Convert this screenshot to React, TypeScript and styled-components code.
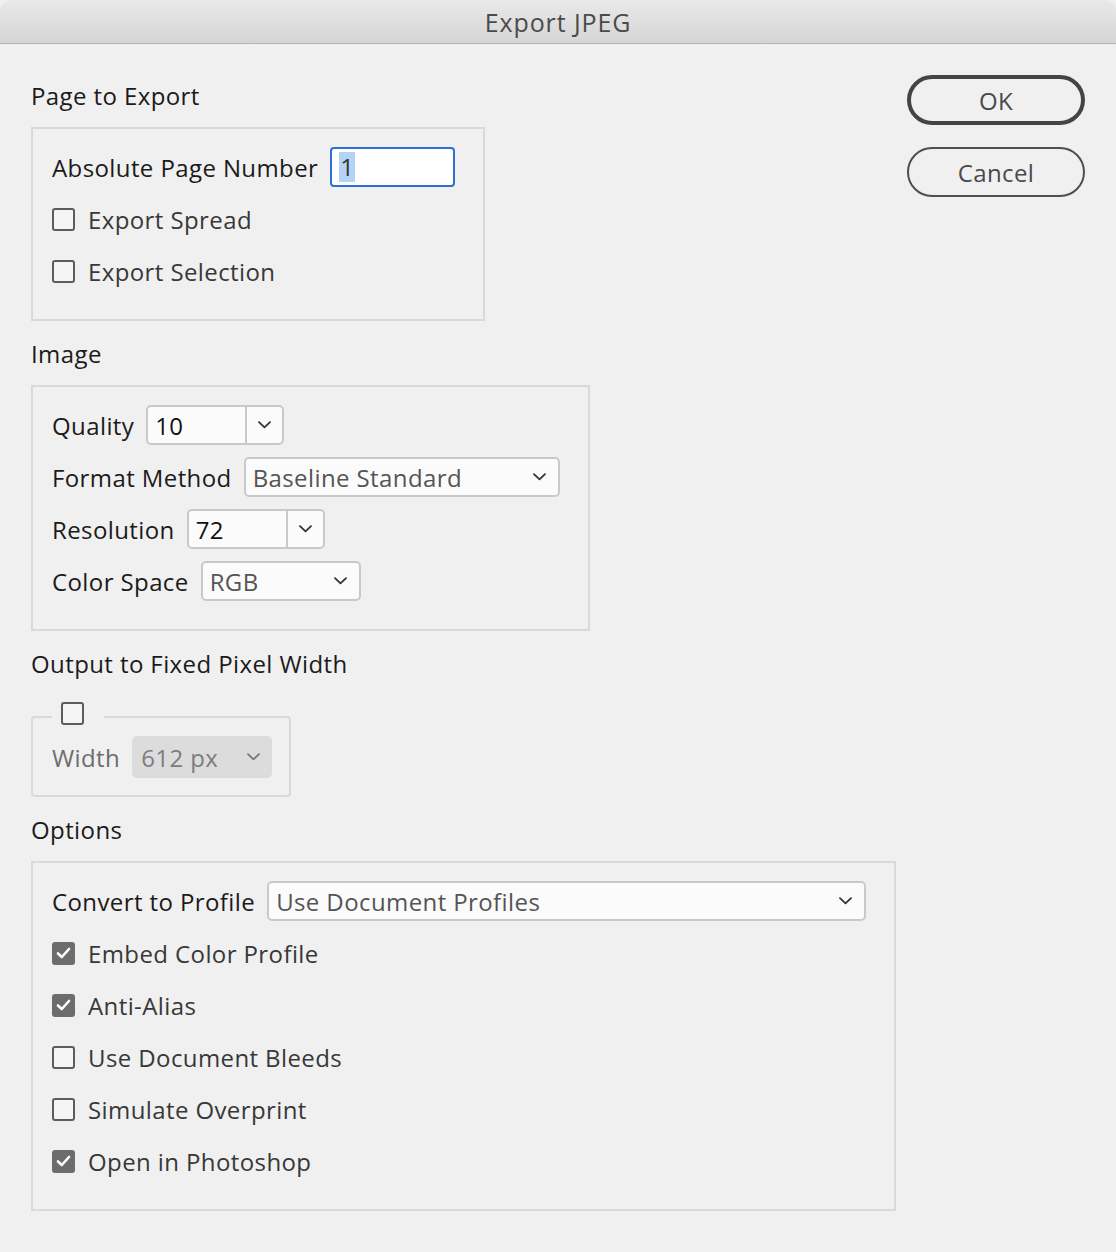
import React from "react"
import styled, { createGlobalStyle } from "styled-components"

const GlobalStyle = createGlobalStyle`
  html, body {
    margin: 0;
    padding: 0;
    background: #f0f0f0;
  }
  body {
    font-family: "Open Sans", "Noto Sans", sans-serif;
    letter-spacing: 0.4px;
    -webkit-font-smoothing: antialiased;
  }
`

const Window = styled.div`
  width: 1116px;
  min-height: 1252px;
  background: #f0f0f0;
  border-top-left-radius: 10px;
  border-top-right-radius: 10px;
  overflow: hidden;
`

const TitleBar = styled.div`
  height: 43px;
  border-bottom: 1px solid #b4b4b4;
  background: linear-gradient(#e9e9e9, #d5d5d5);
  display: flex;
  align-items: center;
  justify-content: center;
  font-size: 25px;
  letter-spacing: 0.9px;
  color: #4b4b4b;
`

const Body = styled.div`
  display: flex;
  padding: 0 31px;
`

const LeftCol = styled.div`
  flex: 1;
  padding-top: 37px;
`

const ButtonCol = styled.div`
  width: 178px;
  padding-top: 31px;
  display: flex;
  flex-direction: column;
  gap: 22px;
`

const Button = styled.button<{ $primary?: boolean }>`
  box-sizing: border-box;
  height: 50px;
  width: 100%;
  border-radius: 25px;
  border: ${p => (p.$primary ? "4px solid #444" : "2px solid #4e4e4e")};
  background: transparent;
  font-family: inherit;
  letter-spacing: inherit;
  font-size: 24px;
  color: #4a4a4a;
  padding: 0;
`

const Heading = styled.div<{ $first?: boolean }>`
  font-size: 24px;
  line-height: 30px;
  color: #1b1b1b;
  margin: ${p => (p.$first ? "0" : "18px")} 0 16px;
`

const Box = styled.div`
  box-sizing: border-box;
  width: fit-content;
  border: 2px solid #d9d9d9;
  padding: 18px 28px 28px 19px;
  display: flex;
  flex-direction: column;
  gap: 12px;
`

const FieldBox = styled.fieldset`
  box-sizing: border-box;
  width: fit-content;
  margin: 23px 0 0;
  border: 2px solid #d9d9d9;
  border-radius: 4px;
  padding: 6px 17px 18px 19px;
`

const Legend = styled.legend`
  padding: 0 20px 6px 9px;
  line-height: 0;
`

const Row = styled.div`
  display: flex;
  align-items: center;
  height: 40px;
  gap: 12px;
`

const Label = styled.span<{ $disabled?: boolean }>`
  font-size: 24px;
  color: ${p => (p.$disabled ? "#6d6d6d" : "#1b1b1b")};
  white-space: nowrap;
`

const CheckRow = styled.label`
  display: flex;
  align-items: center;
  height: 40px;
  gap: 13px;
  font-size: 24px;
  color: #383838;
`

const CheckBox = styled.span<{ $checked?: boolean }>`
  box-sizing: border-box;
  width: 23px;
  height: 23px;
  border-radius: 3px;
  border: 2px solid ${p => (p.$checked ? "#6c6c6c" : "#5c5c5c")};
  background: ${p => (p.$checked ? "#6c6c6c" : "#f5f5f5")};
  display: inline-flex;
  align-items: center;
  justify-content: center;
  flex-shrink: 0;
`

const TextInput = styled.div`
  box-sizing: border-box;
  width: 125px;
  height: 40px;
  border: 2px solid #2d6fd2;
  border-radius: 4px;
  background: #fff;
  display: flex;
  align-items: center;
  padding-left: 7px;
  font-size: 24px;
  color: #333;
`

const Selected = styled.span`
  background: #b4d3f5;
  line-height: 30px;
  padding: 0 1px;
`

const Select = styled.div<{ $w: number; $disabled?: boolean }>`
  box-sizing: border-box;
  width: ${p => p.$w}px;
  height: ${p => (p.$disabled ? 42 : 40)}px;
  border: ${p => (p.$disabled ? "none" : "2px solid #c9c9c9")};
  border-radius: 5px;
  background: ${p => (p.$disabled ? "#dcdcdc" : "#fbfbfb")};
  display: flex;
  align-items: center;
  justify-content: space-between;
  padding: 0 12px 0 ${p => (p.$disabled ? 9 : 7)}px;
  font-size: 24px;
  color: ${p => (p.$disabled ? "#7d7d7d" : "#555")};
`

const Combo = styled.div<{ $w: number }>`
  box-sizing: border-box;
  width: ${p => p.$w}px;
  height: 40px;
  border: 2px solid #c9c9c9;
  border-radius: 5px;
  background: #fbfbfb;
  display: flex;
  font-size: 24px;
  color: #111;
`

const ComboValue = styled.div`
  flex: 1;
  display: flex;
  align-items: center;
  padding-left: 7px;
`

const ComboButton = styled.div`
  width: 35px;
  border-left: 2px solid #c9c9c9;
  display: flex;
  align-items: center;
  justify-content: center;
`

const Chevron = ({ color = "#333" }: { color?: string }) => (
  <svg width="13" height="8" viewBox="0 0 13 8">
    <path d="M1 1.2 L6.5 6.4 L12 1.2" fill="none" stroke={color} strokeWidth="1.8" strokeLinecap="round" strokeLinejoin="round" />
  </svg>
)

const Tick = () => (
  <svg width="15" height="12" viewBox="0 0 15 12">
    <path d="M2 6.5 L5.8 10 L13 2" fill="none" stroke="#fff" strokeWidth="2.6" strokeLinecap="round" strokeLinejoin="round" />
  </svg>
)

type CheckProps = { label?: string; checked?: boolean }

const Check = ({ label, checked }: CheckProps) => (
  <CheckRow>
    <CheckBox $checked={checked}>{checked && <Tick />}</CheckBox>
    {label}
  </CheckRow>
)

const options = [
  { label: "Embed Color Profile", checked: true },
  { label: "Anti-Alias", checked: true },
  { label: "Use Document Bleeds", checked: false },
  { label: "Simulate Overprint", checked: false },
  { label: "Open in Photoshop", checked: true },
]

export default function App() {
  return (
    <Window>
      <GlobalStyle />
      <TitleBar>Export JPEG</TitleBar>
      <Body>
        <LeftCol>
          <Heading $first>Page to Export</Heading>
          <Box>
            <Row>
              <Label>Absolute Page Number</Label>
              <TextInput>
                <Selected>1</Selected>
              </TextInput>
            </Row>
            <Check label="Export Spread" />
            <Check label="Export Selection" />
          </Box>

          <Heading>Image</Heading>
          <Box>
            <Row>
              <Label>Quality</Label>
              <Combo $w={138}>
                <ComboValue>10</ComboValue>
                <ComboButton><Chevron /></ComboButton>
              </Combo>
            </Row>
            <Row>
              <Label>Format Method</Label>
              <Select $w={316}>
                Baseline Standard
                <Chevron />
              </Select>
            </Row>
            <Row>
              <Label>Resolution</Label>
              <Combo $w={138}>
                <ComboValue>72</ComboValue>
                <ComboButton><Chevron /></ComboButton>
              </Combo>
            </Row>
            <Row>
              <Label>Color Space</Label>
              <Select $w={160}>
                RGB
                <Chevron />
              </Select>
            </Row>
          </Box>

          <Heading>Output to Fixed Pixel Width</Heading>
          <FieldBox>
            <Legend>
              <CheckBox />
            </Legend>
            <Row>
              <Label $disabled>Width</Label>
              <Select $w={140} $disabled>
                612 px
                <Chevron color="#777" />
              </Select>
            </Row>
          </FieldBox>

          <Heading>Options</Heading>
          <Box>
            <Row>
              <Label>Convert to Profile</Label>
              <Select $w={599}>
                Use Document Profiles
                <Chevron />
              </Select>
            </Row>
            {options.map(o => (
              <Check key={o.label} label={o.label} checked={o.checked} />
            ))}
          </Box>
        </LeftCol>
        <ButtonCol>
          <Button $primary>OK</Button>
          <Button>Cancel</Button>
        </ButtonCol>
      </Body>
    </Window>
  )
}
